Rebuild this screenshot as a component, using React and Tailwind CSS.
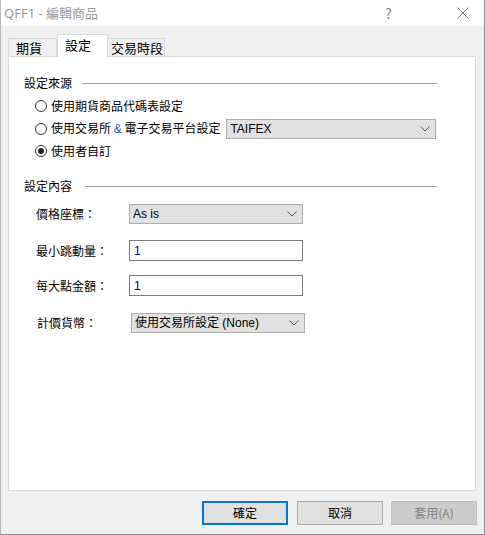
import React from 'react'

const cjk = { fontFamily: '"Noto Sans CJK TC", "Noto Sans", sans-serif' }
const latin = { fontFamily: '"Liberation Sans", "Noto Sans CJK TC", sans-serif' }

function Chevron() {
  return (
    <svg width="10" height="6" viewBox="0 0 10 6" fill="none" stroke="#555" strokeWidth="1">
      <path d="M0.5 0.5 L5 5 L9.5 0.5" />
    </svg>
  )
}

function Radio({ checked, children }) {
  return (
    <div className="flex items-center gap-[4px]">
      <span className="w-[12px] h-[12px] rounded-full border border-[#333] bg-white flex items-center justify-center">
        {checked && <span className="w-[6px] h-[6px] rounded-full bg-[#222]" />}
      </span>
      <span className="text-[12px] leading-[16px] text-black">{children}</span>
    </div>
  )
}

function Select({ value, className = '' }) {
  return (
    <div className={`h-[20px] bg-[#e1e1e1] border border-[#adadad] flex items-center justify-between pl-[3px] pr-[5px] ${className}`}>
      <span className="text-[12px] leading-[16px] text-black" style={latin}>{value}</span>
      <Chevron />
    </div>
  )
}

function Input({ value }) {
  return (
    <div className="w-[174px] h-[21px] bg-white border border-[#7a7a7a] flex items-center pl-[4px]">
      <span className="text-[12px] leading-[16px] text-[#000080]" style={latin}>{value}</span>
    </div>
  )
}

function Section({ title, lineClass }) {
  return (
    <div className="flex items-center h-[16px] pl-[15px] pr-[38px]">
      <span className="text-[12px] leading-[16px] text-black">{title}</span>
      <div className={`flex-1 h-px bg-[#a0a0a0] ${lineClass}`} />
    </div>
  )
}

function Label({ children, w = 'w-[93px]' }) {
  return <span className={`${w} text-[12px] leading-[16px] text-black`}>{children}</span>
}

export default function App() {
  return (
    <div className="w-[485px] h-[535px] bg-[#f0f0f0] border-r border-b border-[#8a8a8a] border-l border-l-[#b8b8b8] flex flex-col" style={cjk}>
      {/* Title bar */}
      <div className="h-[26px] bg-white flex items-center pl-[3px] shrink-0">
        <span className="text-[13px] leading-[16px] text-[#9a9a9a]" style={{ fontFamily: '"Noto Sans", "Noto Sans CJK TC", sans-serif' }}>QFF1 - 編輯商品</span>
        <span className="ml-auto mr-[65px] text-[14px] leading-[16px] text-[#888]">?</span>
        <svg width="12" height="12" viewBox="0 0 12 12" stroke="#777" strokeWidth="1" className="mr-[15px]">
          <path d="M0.5 0.5 L11.5 11.5 M11.5 0.5 L0.5 11.5" />
        </svg>
      </div>

      {/* Tabs */}
      <div className="flex items-end pl-[7px] pt-[8px] h-[30px] shrink-0 relative z-10">
        <div className="w-[49px] h-[18px] border border-b-0 border-[#d9d9d9] bg-[#f0f0f0] flex items-center pl-[7px] text-[13px] leading-[16px] text-black">期貨</div>
        <div className="w-[51px] h-[23px] border border-b-0 border-[#d9d9d9] bg-white flex items-start pt-[2px] pl-[7px] text-[13px] leading-[16px] text-black -mb-px">設定</div>
        <div className="w-[57px] h-[18px] border border-b-0 border-l-0 border-[#d9d9d9] bg-[#f0f0f0] flex items-center pl-[3px] text-[13px] leading-[16px] text-black">交易時段</div>
      </div>

      {/* Panel */}
      <div className="ml-[7px] mr-[8px] h-[435px] bg-white border border-[#d9d9d9] pt-[18px] shrink-0">
        <Section title="設定來源" lineClass="ml-[10px]" />
        <div className="pl-[26px] mt-[4px] flex flex-col">
          <div className="h-[22px] flex items-center">
            <Radio>使用期貨商品代碼表設定</Radio>
          </div>
          <div className="h-[23px] flex items-center">
            <Radio>使用交易所 <span className="text-[#1b5fb4]" style={latin}>&amp;</span> 電子交易平台設定</Radio>
            <Select value="TAIFEX" className="w-[210px] ml-[6px]" />
          </div>
          <div className="h-[22px] flex items-center">
            <Radio checked>使用者自訂</Radio>
          </div>
        </div>

        <div className="mt-[16px]">
          <Section title="設定內容" lineClass="ml-[13px]" />
        </div>

        <div className="pl-[27px] mt-[10px] flex flex-col">
          <div className="flex items-center h-[20px]">
            <Label>價格座標：</Label>
            <Select value="As is" className="w-[174px]" />
          </div>
          <div className="flex items-center h-[21px] mt-[16px]">
            <Label>最小跳動量：</Label>
            <Input value="1" />
          </div>
          <div className="flex items-center h-[21px] mt-[14px]">
            <Label>每大點金額：</Label>
            <Input value="1" />
          </div>
          <div className="flex items-center h-[20px] mt-[17px] pl-[1px]">
            <Label w="w-[94px]">計價貨幣：</Label>
            <Select value="使用交易所設定 (None)" className="w-[174px]" />
          </div>
        </div>
      </div>

      {/* Buttons */}
      <div className="flex justify-end pr-[7px] pt-[10px]">
        <button className="w-[86px] h-[24px] bg-[#e1e1e1] border-2 border-[#0078d7] text-[12px] text-black">確定</button>
        <button className="w-[86px] h-[24px] ml-[9px] bg-[#e1e1e1] border border-[#adadad] text-[12px] text-black">取消</button>
        <button className="w-[86px] h-[24px] ml-[8px] bg-[#cccccc] border border-[#bfbfbf] text-[12px] text-[#838383]">套用(A)</button>
      </div>
    </div>
  )
}
